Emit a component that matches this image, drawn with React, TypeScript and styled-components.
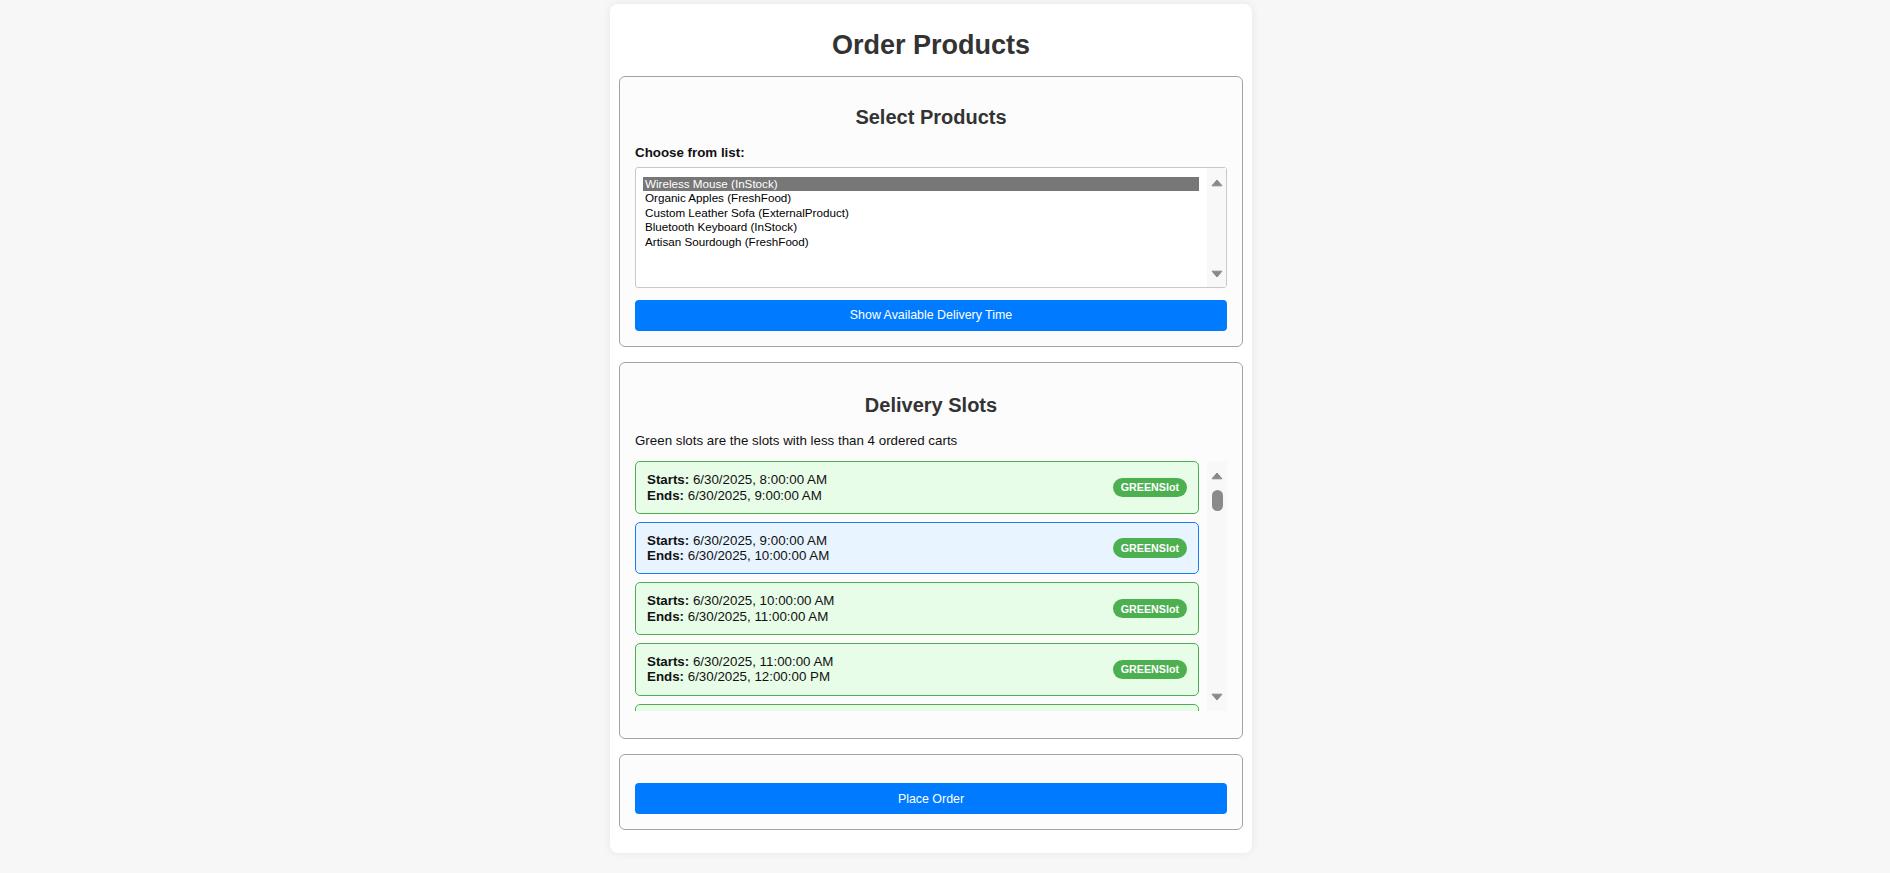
import React from 'react';
import styled, {createGlobalStyle} from 'styled-components';

const GlobalStyle = createGlobalStyle`
  html, body {
    margin: 0;
    padding: 0;
    background: #f7f7f7;
  }
  body {
    font-family: "Liberation Sans", Arial, sans-serif;
    color: #222;
  }
`;

const Page = styled.div`
  display: flex;
  justify-content: center;
  padding: 4px 28px 20px 0;
`;

const Card = styled.main`
  width: 642px;
  box-sizing: border-box;
  background: #fff;
  border-radius: 8px;
  box-shadow: 0 0 10px rgba(0, 0, 0, 0.07);
  padding: 26px 9px 23px;
`;

const Title = styled.h1`
  margin: 0 0 15px;
  font-size: 27px;
  line-height: 31px;
  font-weight: 700;
  text-align: center;
  color: #333;
`;

const Section = styled.section`
  border: 1px solid #a3a3a3;
  border-radius: 6px;
  background: #fcfcfc;
  padding: 28px 15px 15px;

  & + & {
    margin-top: 15px;
  }
`;

const SectionTitle = styled.h2<{topGap?: number}>`
  margin: ${({topGap}) => topGap || 0}px 0 16px;
  font-size: 20px;
  line-height: 23px;
  font-weight: 700;
  text-align: center;
  color: #333;
`;

const FieldLabel = styled.label`
  display: block;
  font-size: 13.33px;
  line-height: 15px;
  font-weight: 700;
  color: #111;
  margin-bottom: 6.5px;
`;

const ListBox = styled.div`
  display: flex;
  height: 121px;
  box-sizing: border-box;
  border: 1px solid #c9c9c9;
  border-radius: 3px;
  background: #fff;
`;

const OptionList = styled.div`
  flex: 1;
  padding: 9px 8px 0 7px;
`;

const Option = styled.div<{selected?: boolean}>`
  height: 14.5px;
  line-height: 14.5px;
  padding: 0 2px;
  font-size: 11.65px;
  white-space: nowrap;
  color: ${({selected}) => selected ? '#fff' : '#000'};
  background: ${({selected}) => selected ? '#777' : 'transparent'};
`;

const Track = styled.div<{top: number; bottom: number; wide?: boolean}>`
  width: ${({wide}) => wide ? 20 : 19}px;
  flex-shrink: 0;
  display: flex;
  flex-direction: column;
  align-items: center;
  background: #f8f8f8;
  padding: ${({top, bottom}) => `${top}px 0 ${bottom}px`};
  box-sizing: border-box;
`;

const Thumb = styled.div`
  width: 11px;
  height: 21px;
  border-radius: 6px;
  background: #8a8a8a;
  margin-top: 10px;
`;

const TrackSpacer = styled.div`
  flex: 1;
`;

const BlueButton = styled.button`
  display: block;
  width: 100%;
  height: 31px;
  margin-top: 12px;
  border: none;
  border-radius: 4px;
  background: #007bff;
  color: #fff;
  font-family: "Liberation Sans", Arial, sans-serif;
  font-size: 12.4px;
  cursor: pointer;
`;

const PlaceButton = styled(BlueButton)`
  margin-top: 0;
`;

const Hint = styled.p`
  margin: 0 0 13.5px;
  font-size: 13.33px;
  line-height: 15.3px;
  color: #111;
`;

const SlotViewport = styled.div`
  display: flex;
  gap: 8px;
  height: 250px;
  margin-bottom: 12px;
`;

const SlotScroller = styled.div`
  flex: 1;
  overflow: hidden;
`;

const SlotCard = styled.div<{selected?: boolean}>`
  display: flex;
  align-items: center;
  justify-content: space-between;
  padding: 10px 11px;
  margin-bottom: 8px;
  border: 1px solid ${({selected}) => selected ? '#1a7cf0' : '#4caf50'};
  border-radius: 5px;
  background: ${({selected}) => selected ? '#e8f4ff' : '#e8fde8'};
  font-size: 13.33px;
  line-height: 15.3px;
  color: #111;
`;

const SlotTimes = styled.div`
  b {
    font-weight: 700;
  }
`;

const Badge = styled.span`
  background: #4caf50;
  color: #fff;
  font-size: 10.7px;
  line-height: 12.4px;
  font-weight: 700;
  padding: 3.5px 8px;
  border-radius: 10px;
`;

const Arrow = ({down}: {down?: boolean}) => (
  <svg width="12" height="8" viewBox="0 0 12 8" style={{display: 'block'}}>
    <path
      d={down ? 'M1 1.2 L11 1.2 L6 7 Z' : 'M1 6.8 L11 6.8 L6 1 Z'}
      fill="#8a8a8a"
      stroke="#8a8a8a"
      strokeWidth="1"
      strokeLinejoin="round"
    />
  </svg>
);

const products = [
  'Wireless Mouse (InStock)',
  'Organic Apples (FreshFood)',
  'Custom Leather Sofa (ExternalProduct)',
  'Bluetooth Keyboard (InStock)',
  'Artisan Sourdough (FreshFood)',
];

interface Slot {
  start: string;
  end: string;
}

const slots: Slot[] = [
  {start: '6/30/2025, 8:00:00 AM', end: '6/30/2025, 9:00:00 AM'},
  {start: '6/30/2025, 9:00:00 AM', end: '6/30/2025, 10:00:00 AM'},
  {start: '6/30/2025, 10:00:00 AM', end: '6/30/2025, 11:00:00 AM'},
  {start: '6/30/2025, 11:00:00 AM', end: '6/30/2025, 12:00:00 PM'},
  {start: '6/30/2025, 12:00:00 PM', end: '6/30/2025, 1:00:00 PM'},
  {start: '6/30/2025, 1:00:00 PM', end: '6/30/2025, 2:00:00 PM'},
];

const App = () => {
  const selectedSlot = 1;

  return (
    <Page>
      <GlobalStyle />
      <Card>
        <Title>Order Products</Title>

        <Section>
          <SectionTitle topGap={1}>Select Products</SectionTitle>
          <FieldLabel>Choose from list:</FieldLabel>
          <ListBox>
            <OptionList>
              {products.map((p, i) => (
                <Option key={p} selected={i === 0}>{p}</Option>
              ))}
            </OptionList>
            <Track top={11} bottom={9}>
              <Arrow />
              <TrackSpacer />
              <Arrow down />
            </Track>
          </ListBox>
          <BlueButton>Show Available Delivery Time</BlueButton>
        </Section>

        <Section>
          <SectionTitle topGap={3}>Delivery Slots</SectionTitle>
          <Hint>Green slots are the slots with less than 4 ordered carts</Hint>
          <SlotViewport>
            <SlotScroller>
              {slots.map((s, i) => (
                <SlotCard key={s.start} selected={i === selectedSlot}>
                  <SlotTimes>
                    <div><b>Starts:</b> {s.start}</div>
                    <div><b>Ends:</b> {s.end}</div>
                  </SlotTimes>
                  <Badge>GREENSlot</Badge>
                </SlotCard>
              ))}
            </SlotScroller>
            <Track top={11} bottom={10} wide>
              <Arrow />
              <Thumb />
              <TrackSpacer />
              <Arrow down />
            </Track>
          </SlotViewport>
        </Section>

        <Section>
          <PlaceButton>Place Order</PlaceButton>
        </Section>
      </Card>
    </Page>
  );
};

export default App;
